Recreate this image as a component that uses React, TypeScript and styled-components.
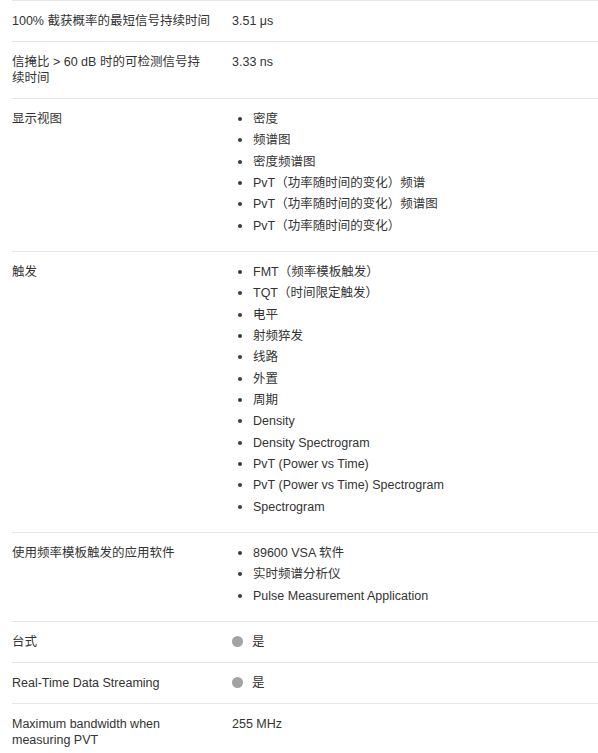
import styled, { createGlobalStyle } from "styled-components";

const GlobalStyle = createGlobalStyle`
    html, body {
        margin: 0;
        padding: 0;
        background: #ffffff;
    }
    body {
        font-family: "Liberation Sans", Arial, "Noto Sans CJK SC", sans-serif;
        font-size: 12.5px;
        color: #333333;
    }
`;

type Value =
    | { kind: "text"; lines: string[] }
    | { kind: "list"; items: string[] }
    | { kind: "yes"; label: string };

interface Spec {
    label: string[];
    value: Value;
}

const specs: Spec[] = [
    { label: ["100% 截获概率的最短信号持续时间"], value: { kind: "text", lines: ["3.51 μs"] } },
    { label: ["信掩比 > 60 dB 时的可检测信号持", "续时间"], value: { kind: "text", lines: ["3.33 ns"] } },
    {
        label: ["显示视图"],
        value: {
            kind: "list",
            items: [
                "密度",
                "频谱图",
                "密度频谱图",
                "PvT（功率随时间的变化）频谱",
                "PvT（功率随时间的变化）频谱图",
                "PvT（功率随时间的变化）",
            ],
        },
    },
    {
        label: ["触发"],
        value: {
            kind: "list",
            items: [
                "FMT（频率模板触发）",
                "TQT（时间限定触发）",
                "电平",
                "射频猝发",
                "线路",
                "外置",
                "周期",
                "Density",
                "Density Spectrogram",
                "PvT (Power vs Time)",
                "PvT (Power vs Time) Spectrogram",
                "Spectrogram",
            ],
        },
    },
    {
        label: ["使用频率模板触发的应用软件"],
        value: {
            kind: "list",
            items: ["89600 VSA 软件", "实时频谱分析仪", "Pulse Measurement Application"],
        },
    },
    { label: ["台式"], value: { kind: "yes", label: "是" } },
    { label: ["Real-Time Data Streaming"], value: { kind: "yes", label: "是" } },
    { label: ["Maximum bandwidth when", "measuring PVT"], value: { kind: "text", lines: ["255 MHz"] } },
];

const renderValue = (value: Value) => {
    if (value.kind === "list") {
        return (
            <BulletList>
                {value.items.map((item) => (
                    <BulletItem key={item}>{item}</BulletItem>
                ))}
            </BulletList>
        );
    }
    if (value.kind === "yes") {
        return (
            <YesValue>
                <YesDot />
                <span>{value.label}</span>
            </YesValue>
        );
    }
    return value.lines.map((line) => <Line key={line}>{line}</Line>);
};

export default function App() {
    return (
        <>
            <GlobalStyle />
            <SpecTable>
                {specs.map((spec) => (
                    <SpecRow key={spec.label.join("")}>
                        <LabelCell>
                            {spec.label.map((line) => (
                                <Line key={line}>{line}</Line>
                            ))}
                        </LabelCell>
                        <ValueCell>{renderValue(spec.value)}</ValueCell>
                    </SpecRow>
                ))}
            </SpecTable>
        </>
    );
}

const SpecTable = styled.div`
    display: flex;
    flex-direction: column;
    padding-left: 12px;
`;

const SpecRow = styled.div`
    display: grid;
    grid-template-columns: 220px 1fr;
    border-top: solid 1px #e6e6e6;
    padding: 12px 0;
    line-height: 16px;
`;

const LabelCell = styled.div`
    display: flex;
    flex-direction: column;
`;

const ValueCell = styled.div`
    display: flex;
    flex-direction: column;
`;

const Line = styled.div`
    white-space: nowrap;
`;

const BulletList = styled.ul`
    margin: 0;
    padding: 0 0 0 21px;
    list-style: disc;
`;

const BulletItem = styled.li`
    line-height: 16px;
    margin-bottom: 5.33px;
    &::marker {
        font-size: 13px;
        color: #3a3a3a;
    }
`;

const YesValue = styled.div`
    display: flex;
    align-items: center;
    gap: 9px;
`;

const YesDot = styled.span`
    width: 11px;
    height: 11px;
    border-radius: 50%;
    background-color: #a3a3a3;
`;
